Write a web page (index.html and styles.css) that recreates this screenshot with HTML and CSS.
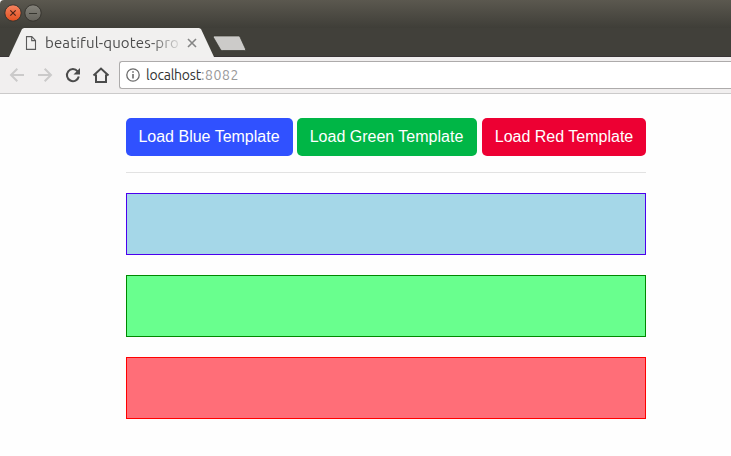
FILE: index.html
```html
<!DOCTYPE html>
<html lang="en">
<head>
<meta charset="utf-8">
<title>beatiful-quotes-pro</title>
<link rel="stylesheet" href="styles.css">
</head>
<body>
<header class="titlebar">
  <svg class="window-controls" width="46" height="28" viewBox="0 0 46 28">
    <defs>
      <linearGradient id="close" x2="0" y2="1"><stop stop-color="#f58461"/><stop offset="1" stop-color="#e2501f"/></linearGradient>
      <linearGradient id="min" x2="0" y2="1"><stop stop-color="#85837b"/><stop offset="1" stop-color="#64625b"/></linearGradient>
    </defs>
    <circle cx="13" cy="13" r="8.2" fill="url(#close)" stroke="#35332e"/>
    <path d="M10.3 10.3l5.4 5.4m0-5.4l-5.4 5.4" stroke="#4b2418" stroke-width="1.2"/>
    <circle cx="33" cy="13" r="8.2" fill="url(#min)" stroke="#35332e"/>
    <path d="M29 13.5h8" stroke="#36352f"/>
  </svg>
</header>
<div class="tabstrip">
  <div class="tab">
    <svg class="page-icon" width="12" height="14" viewBox="0 0 12 14" fill="none" stroke="#5a5a5a" stroke-width="1.1"><path d="M1.5.6h5.3l3.7 3.8v9h-9zM6.7.6v4h3.8"/></svg>
    <span class="tab-title">beatiful-quotes-pro</span>
    <svg class="tab-close" width="10" height="10" viewBox="0 0 10 10" stroke="#858585" stroke-width="1.6"><path d="M1 1l8 8m0-8l-8 8"/></svg>
  </div>
  <svg class="new-tab" width="35" height="17" viewBox="0 0 35 17"><path d="M1.500 1h25q1 0 1.500 1l5.500 12q.5 1.500-1 1.500h-22q-1.500 0-2-1l-7-12z" fill="#cccbc9" stroke="#37362f" stroke-width=".7"/></svg>
</div>
<nav class="toolbar">
  <svg class="nav-icons" width="119" height="36" viewBox="0 0 119 36" fill="none" stroke-width="2">
    <path d="M24 18H11m6.300-6.300L11 18l6.300 6.300" stroke="#cbcaca"/>
    <path d="M38 18h13m-6.300-6.300L51 18l-6.300 6.300" stroke="#cbcaca"/>
    <path d="M77.600 14.300A6 6 0 1 0 78.800 19.500" stroke="#4b4b4b"/>
    <path d="M80 11v6.500h-6.500z" fill="#4b4b4b"/>
    <path d="M93.500 18.500l7.500-7 7.500 7M96 17.500V25h10v-7.500" stroke="#4b4b4b"/>
  </svg>
  <div class="address">
    <svg width="14" height="14" viewBox="0 0 14 14" fill="none" stroke="#6b6b6b" stroke-width="1.3"><circle cx="7" cy="7" r="6.200"/><path d="M7 6v4.500M7 3.300v1.500" stroke-width="1.600"/></svg>
    <span class="url">localhost<span class="port">:8082</span></span>
  </div>
</nav>
<main>
  <div class="buttons">
    <button class="blue">Load Blue Template</button>
    <button class="green">Load Green Template</button>
    <button class="red">Load Red Template</button>
  </div>
  <hr>
  <section class="box box-blue"></section>
  <section class="box box-green"></section>
  <section class="box box-red"></section>
</main>
</body>
</html>
```
FILE: styles.css
```css
* { box-sizing: border-box; }
body { margin: 0; height: 456px; overflow: hidden; background: #fefefe; font-family: "Liberation Sans", Arial, sans-serif; }
svg { display: block; flex: none; }
.titlebar { height: 28px; background: linear-gradient(#5b584f, #3f3e38); border-top-left-radius: 4px; }
.tabstrip { height: 29px; display: flex; background: #41403a; border-bottom: 1px solid #393536; }
.tab { width: 205px; height: 29px; margin-left: 9px; padding: 1px 0 0 16px; flex: none; display: flex; align-items: center; background: #f1f0ef; clip-path: polygon(0 100%, 13px 1px, 15px 0, 190px 0, 192px 1px, 100% 100%); }
.tab-title { width: 137px; margin-left: 8px; white-space: nowrap; font: 15px/20px Ubuntu, "Noto Sans", sans-serif; letter-spacing: 0.15px; color: #4c4c4c; -webkit-mask-image: linear-gradient(90deg, #000 105px, transparent 138px); mask-image: linear-gradient(90deg, #000 105px, transparent 138px); }
.tab-close { margin-left: 5px; }
.new-tab { margin: 7px 0 0 -2px; }
.toolbar { height: 37px; display: flex; background: #f1efef; border-bottom: 1px solid #cbcaca; }
.address { flex: 1; height: 28px; margin-top: 4px; padding-left: 6px; display: flex; align-items: center; gap: 6px; background: #fff; border: 1px solid #adabab; border-right: 0; border-radius: 3px 0 0 3px; }
.url { font: 14px/20px Ubuntu, "Noto Sans", sans-serif; letter-spacing: -0.22px; color: #333; white-space: nowrap; }
.port { color: #999; letter-spacing: 0.600px; }
main { width: 520px; margin: 24px 0 0 126px; }
.buttons { display: flex; justify-content: space-between; height: 38px; }
button { padding: 0 1px 1px 0; border: 0; border-radius: 5px; color: #fff; font: 16px/24px "Liberation Sans", Arial, sans-serif; white-space: nowrap; }
.blue { width: 167px; background: #3051ff; }
.green { width: 180px; margin-right: 1px; background: #00b646; }
.red { width: 164px; padding-right: 0; background: #ed0033; }
hr { height: 1px; margin: 16px 0 20px; border: 0; background: #e2e2e2; }
.box { height: 62px; margin-bottom: 20px; border: 1px solid; }
.box-blue { background: #a5d7e8; border-color: #4b00ee; }
.box-green { background: #69ff8e; border-color: #008800; }
.box-red { background: #ff6e78; border-color: #ff0000; }
```
